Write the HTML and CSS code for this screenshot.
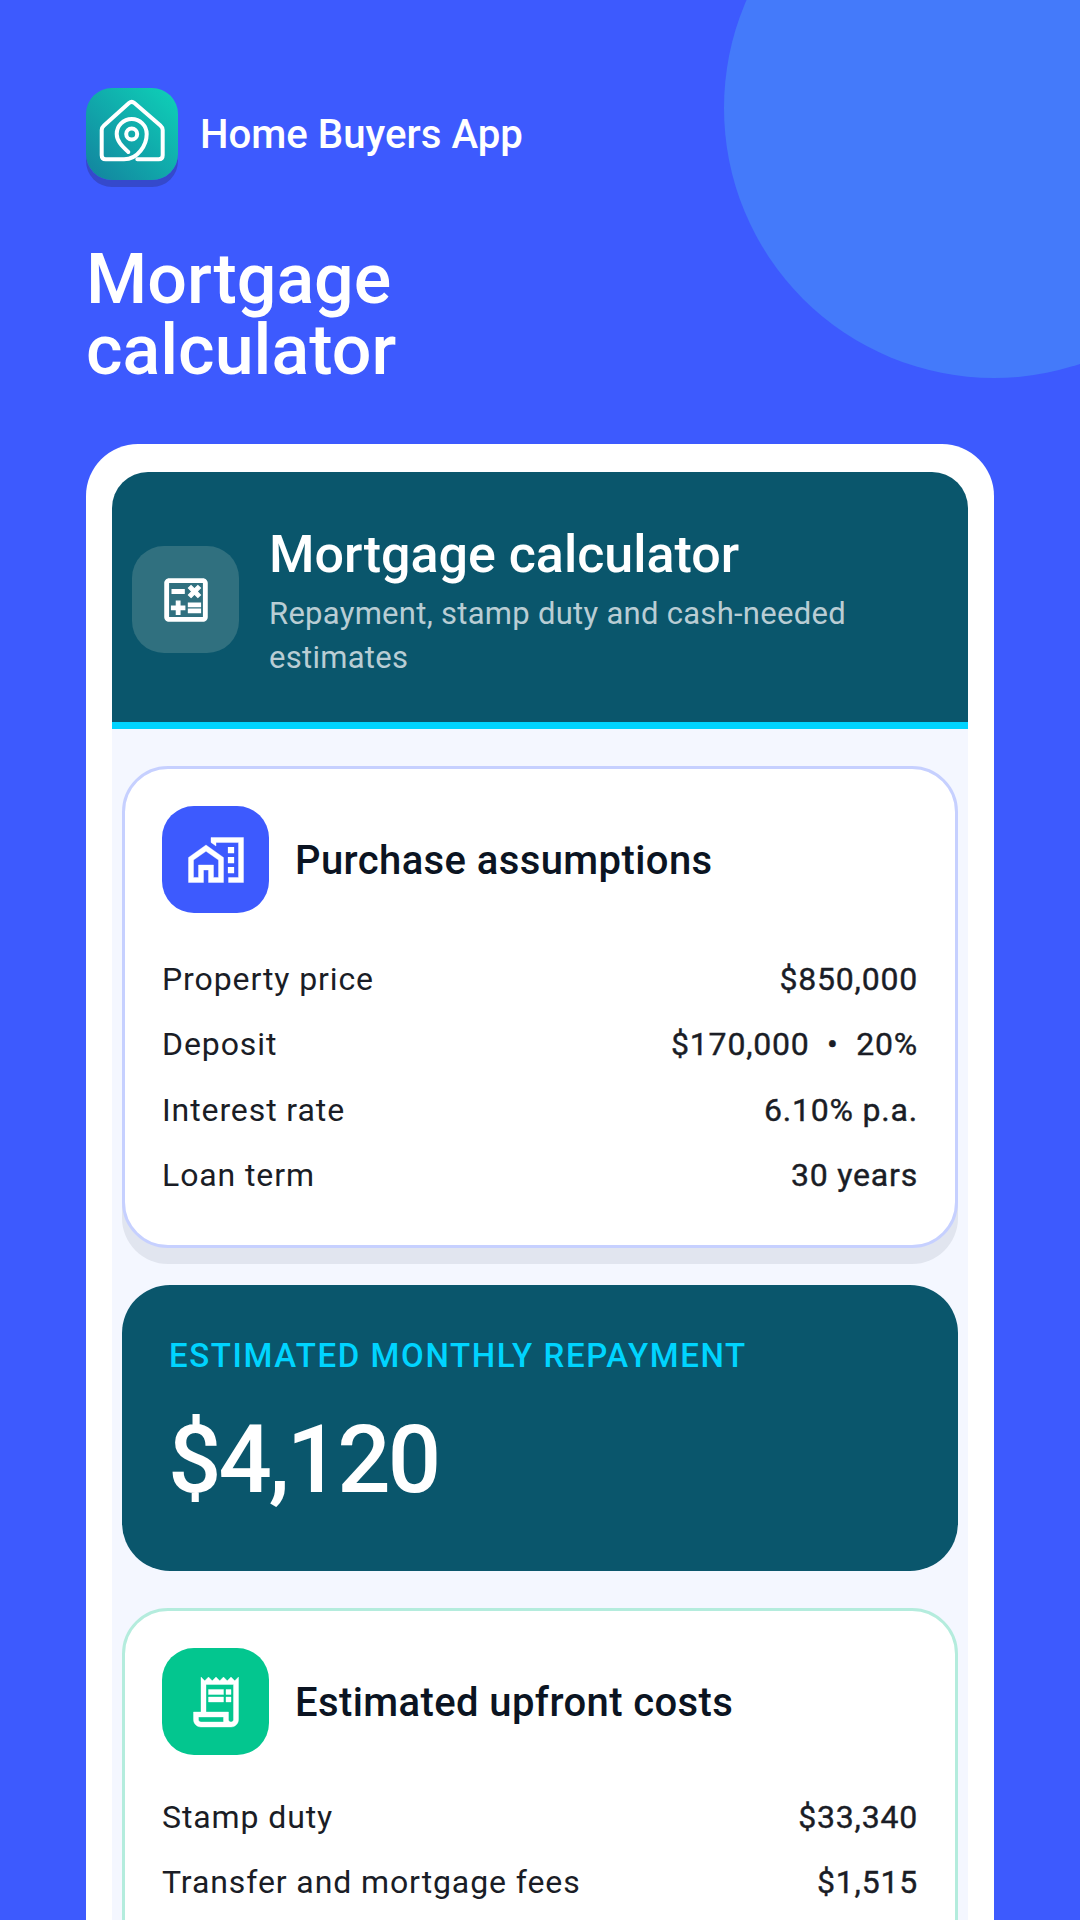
FILE: index.html
```html
<!DOCTYPE html>
<html lang="en">
<head>
<meta charset="utf-8">
<title>Mortgage calculator</title>
<link rel="stylesheet" href="styles.css">
</head>
<body>
<main class="page">
  <div class="blob"></div>
  <header class="brand">
    <div class="logo">
      <svg width="92" height="92" viewBox="0 0 92 92" fill="none" stroke="#fff" stroke-width="4" stroke-linecap="round" stroke-linejoin="round">
        <path d="M42.3 64C36 58 30.7 53 30.7 46A15 15 0 1 1 60.7 46C60.7 57 52 71.3 38 71.3H19.7Q15.7 71.3 15.7 67.3V42Q15.7 39.500 18 37.500L43 15Q45.700 12.700 48.400 15L74.400 37.500Q76.700 39.500 76.700 42V67.300Q76.700 71.300 72.700 71.300H51.300"/>
        <circle cx="45.700" cy="46" r="5.500"/>
      </svg>
    </div>
    <span class="brand-name">Home Buyers App</span>
  </header>
  <h1 class="page-title">Mortgage<br>calculator</h1>

  <section class="card">
    <div class="card-head">
      <div class="icon-box icon-glass">
        <svg width="58" height="58" viewBox="0 0 24 24" fill="#fff"><path d="M19 3H5C3.900 3 3 3.900 3 5v14c0 1.100.9 2 2 2h14c1.100 0 2-.9 2-2V5c0-1.100-.9-2-2-2zm0 16H5V5h14v14z"/><path class="sym-bold" d="M6.250 7.720h5v1.500h-5zM13 15.750h5v1.500h-5zM13 13.250h5v1.500h-5zM8 18h1.500v-2h2v-1.500h-2v-2H8v2H6V16h2zM14.090 10.950l1.410-1.410 1.410 1.410 1.060-1.060-1.410-1.420 1.410-1.410L16.910 6 15.500 7.410 14.090 6l-1.060 1.060 1.410 1.410-1.410 1.420z"/></svg>
      </div>
      <div class="head-text">
        <h2 class="head-title">Mortgage calculator</h2>
        <p class="head-sub">Repayment, stamp duty and cash-needed estimates</p>
      </div>
    </div>
    <div class="card-body">
      <article class="panel panel-blue">
        <div class="panel-head">
          <div class="icon-box icon-blue">
            <svg width="60" height="60" viewBox="0 0 24 24" fill="#fff"><path class="sym-bold" d="M17 7h2v2h-2zM17 11h2v2h-2zM17 15h2v2h-2z"/><path class="sym-firm" d="M1 11v10h6v-5h2v5h6V11L8 6l-7 5zm12 8h-2v-5H5v5H3v-7l5-3.500 5 3.500v7zM10 3v1.970l2 1.430V5h9v14h-4v2h6V3z"/></svg>
          </div>
          <h3 class="panel-title">Purchase assumptions</h3>
        </div>
        <dl class="rows">
          <div class="row"><dt>Property price</dt><dd>$850,000</dd></div>
          <div class="row"><dt>Deposit</dt><dd>$170,000 &nbsp;•&nbsp; 20%</dd></div>
          <div class="row"><dt>Interest rate</dt><dd>6.10% p.a.</dd></div>
          <div class="row"><dt>Loan term</dt><dd>30 years</dd></div>
        </dl>
      </article>

      <article class="monthly">
        <div class="monthly-label">ESTIMATED MONTHLY REPAYMENT</div>
        <div class="monthly-value">$4,120</div>
      </article>

      <article class="panel panel-green">
        <div class="panel-head">
          <div class="icon-box icon-green">
            <svg width="60" height="60" viewBox="0 0 24 24" fill="#fff"><path class="sym-firm" d="M19.500 3.500 18 2l-1.500 1.500L15 2l-1.500 1.500L12 2l-1.500 1.500L9 2 7.500 3.500 6 2v14H3v3c0 1.660 1.340 3 3 3h12c1.660 0 3-1.340 3-3V2l-1.500 1.500zM15 20H6c-.55 0-1-.45-1-1v-1h10v2zm4-1c0 .55-.45 1-1 1s-1-.45-1-1v-3H8V5h11v14z"/><path class="sym-firm" d="M9 7h6v2H9zM16 7h2v2h-2zM9 10h6v2H9zM16 10h2v2h-2z"/></svg>
          </div>
          <h3 class="panel-title">Estimated upfront costs</h3>
        </div>
        <dl class="rows rows-tight">
          <div class="row"><dt>Stamp duty</dt><dd>$33,340</dd></div>
          <div class="row"><dt>Transfer and mortgage fees</dt><dd>$1,515</dd></div>
        </dl>
      </article>
    </div>
  </section>
</main>
</body>
</html>
```
FILE: styles.css
```css
* { box-sizing: border-box; margin: 0; padding: 0; }
html, body { width: 1080px; height: 1920px; overflow: hidden; }
body { font-family: Roboto, "Liberation Sans", sans-serif; background: #3d5afe; }

.page { position: relative; width: 1080px; height: 1920px; overflow: hidden; padding: 88px 86px 0; background: #3d5afe; color: #fff; }
.blob { position: absolute; top: -162px; left: 724px; width: 540px; height: 540px; border-radius: 50%; background: #447afa; }

.brand { position: relative; display: flex; align-items: center; gap: 22px; }
.logo { width: 92px; height: 92px; border-radius: 26px; background: linear-gradient(45deg, #13829e 0%, #0ed2b8 100%); box-shadow: 0 7px 0 #3549cc; }
.logo svg { display: block; }
.brand-name { padding-top: 2px; font-size: 40.200px; font-weight: 500; line-height: 90px; }

.page-title { position: relative; margin-top: 64px; font-size: 70px; font-weight: 500; line-height: 71px; }

.card { position: relative; margin-top: 58px; padding: 28px 26px 0; background: #fff; border-radius: 52px 52px 0 0; width: 908px; height: 1500px; }
.card-head { display: flex; align-items: center; gap: 30px; height: 257px; padding: 5px 20px 0; background: #0a566c; border-bottom: 7px solid #00d4ff; border-radius: 36px 36px 0 0; }
.icon-box { flex: none; display: flex; align-items: center; justify-content: center; width: 107px; height: 107px; border-radius: 32px; }
.icon-glass { background: #30707f; }
.icon-blue { background: #3d5afe; }
.icon-green { background: #03c68f; }
.sym-bold { stroke: #fff; stroke-width: 0.500px; }
.sym-firm { stroke: #fff; stroke-width: 0.150px; }
.head-text { padding-top: 5px; }
.head-title { font-size: 52px; font-weight: 500; line-height: 62px; }
.head-sub { margin-top: 6px; font-size: 31px; line-height: 44px; letter-spacing: 0.280px; color: #b9cdd4; }

.card-body { display: flex; flex-direction: column; gap: 37px; padding: 37px 10px 0; background: #f4f7ff; height: 1300px; }
.panel { flex: none; background: #fff; border: 3px solid; border-radius: 46px; padding: 37px 37px 0; color: #0b1422; }
.panel-blue { height: 482px; border-color: #c6d0ff; box-shadow: 0 16px 0 #e1e5ef; }
.panel-green { height: 600px; border-color: #b4ecdd; }
.panel-head { display: flex; align-items: center; gap: 26px; }
.panel-title { padding-top: 2px; font-size: 40px; font-weight: 500; line-height: 50px; letter-spacing: 0.400px; }
.rows { display: flex; flex-direction: column; gap: 25px; margin-top: 46px; }
.rows-tight { margin-top: 42px; }
.row { display: flex; justify-content: space-between; font-size: 32px; line-height: 40.400px; letter-spacing: 0.900px; color: #1a1d26; }
.row dt { font-weight: 400; }
.row dd { font-weight: 400; letter-spacing: 0.800px; -webkit-text-stroke: 0.400px #1a1d26; }

.monthly { flex: none; height: 286px; padding: 48px 47px 0; border-radius: 48px; background: #0a566c; }
.monthly-label { font-size: 33px; font-weight: 500; line-height: 46px; letter-spacing: 1.600px; color: #00d4ff; }
.monthly-value { margin: 27px 0 0 -1px; font-size: 94px; font-weight: 500; line-height: 108px; letter-spacing: -3px; }
```
